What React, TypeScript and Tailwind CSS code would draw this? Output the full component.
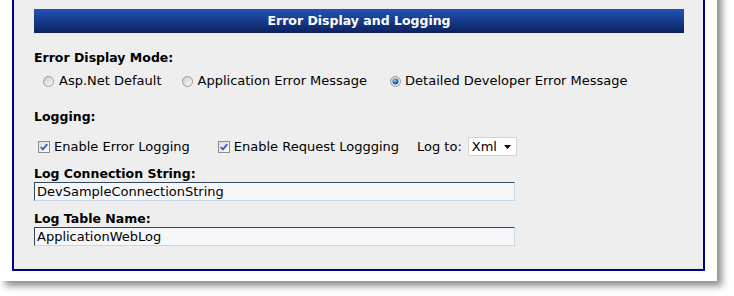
const Radio = ({ checked }: { checked?: boolean }) => (
  <svg width="11" height="11" viewBox="0 0 11 11" className="shrink-0">
    <defs>
      <linearGradient id="rg" x1="0" y1="0" x2="1" y2="1">
        <stop offset="0" stopColor="#c8c8c8" />
        <stop offset="1" stopColor="#ffffff" />
      </linearGradient>
      <radialGradient id="dot" cx="0.4" cy="0.35" r="0.7">
        <stop offset="0" stopColor="#8fd0ff" />
        <stop offset="0.5" stopColor="#2a7ad0" />
        <stop offset="1" stopColor="#0a3a80" />
      </radialGradient>
    </defs>
    <circle cx="5.5" cy="5.5" r="5" fill="url(#rg)" stroke="#9a9a9a" strokeWidth="1" />
    {checked && <circle cx="5.5" cy="5.5" r="3" fill="url(#dot)" />}
  </svg>
);

const Check = () => (
  <svg width="12" height="12" viewBox="0 0 12 12" className="shrink-0">
    <defs>
      <linearGradient id="cg" x1="0" y1="0" x2="1" y2="1">
        <stop offset="0" stopColor="#dcdcdc" />
        <stop offset="1" stopColor="#ffffff" />
      </linearGradient>
    </defs>
    <rect x="0.5" y="0.5" width="11" height="11" fill="url(#cg)" stroke="#8c8c8c" />
    <path d="M2.7 6 L4.9 8.4 L9.3 3.2" fill="none" stroke="#3858c8" strokeWidth="1.8" />
  </svg>
);

const Label = ({ children }: { children: React.ReactNode }) => (
  <div className="text-[12.5px] font-bold leading-[16px] text-black">{children}</div>
);

export default function App() {
  return (
    <div className="h-[296px] w-[734px] overflow-hidden bg-white font-['Verdana','DejaVu_Sans',sans-serif] text-[13px] text-black">
      <div className="-mt-[14px] w-[717px] bg-white px-[12px] pt-[12px] pb-[10px] shadow-[5px_5px_7px_rgba(0,0,0,0.45)]">
        <div className="border-2 border-[#000080] bg-[#eeeeee] pr-[19px] pl-[20px] pt-[9px] pb-[23px]">
          <div className="flex h-[24px] items-center justify-center bg-gradient-to-b from-[#2353b8] to-[#0b235e] text-[12.5px] font-bold text-white">
            Error Display and Logging
          </div>

          <div className="mt-[17px]">
            <Label>Error Display Mode:</Label>
          </div>
          <div className="mt-[7px] flex h-[16px] items-center pl-[9px] leading-[16px]">
            <Radio />
            <span className="ml-[5px]">Asp.Net Default</span>
            <span className="ml-[20px]" />
            <Radio />
            <span className="ml-[5px]">Application Error Message</span>
            <span className="ml-[23px]" />
            <Radio checked />
            <span className="ml-[4px]">Detailed Developer Error Message</span>
          </div>

          <div className="mt-[20px]">
            <Label>Logging:</Label>
          </div>
          <div className="mt-[12px] flex h-[19px] items-center pl-[4px]">
            <Check />
            <span className="ml-[4px]">Enable Error Logging</span>
            <span className="ml-[28px]" />
            <Check />
            <span className="ml-[4px]">Enable Request Loggging</span>
            <span className="ml-[18px]">Log to:</span>
            <div className="ml-[6px] flex h-[19px] w-[49px] items-center justify-between border border-[#d4d4d4] bg-white pr-[5px] pl-[3px]">
              <span>Xml</span>
              <svg width="7" height="4" viewBox="0 0 7 4">
                <path d="M0 0 H7 L3.5 4 Z" fill="#000" />
              </svg>
            </div>
          </div>

          <div className="mt-[10px]">
            <Label>Log Connection String:</Label>
          </div>
          <div className="flex h-[19px] w-[481px] items-center border border-t-[#34495e] border-l-[#34495e] border-r-[#c5d6e8] border-b-[#c5d6e8] bg-[#f5f7fa] pl-[2px]">
            DevSampleConnectionString
          </div>

          <div className="mt-[10px]">
            <Label>Log Table Name:</Label>
          </div>
          <div className="flex h-[19px] w-[481px] items-center border border-t-[#34495e] border-l-[#34495e] border-r-[#c5d6e8] border-b-[#c5d6e8] bg-[#f5f7fa] pl-[2px]">
            ApplicationWebLog
          </div>
        </div>
      </div>
    </div>
  );
}
